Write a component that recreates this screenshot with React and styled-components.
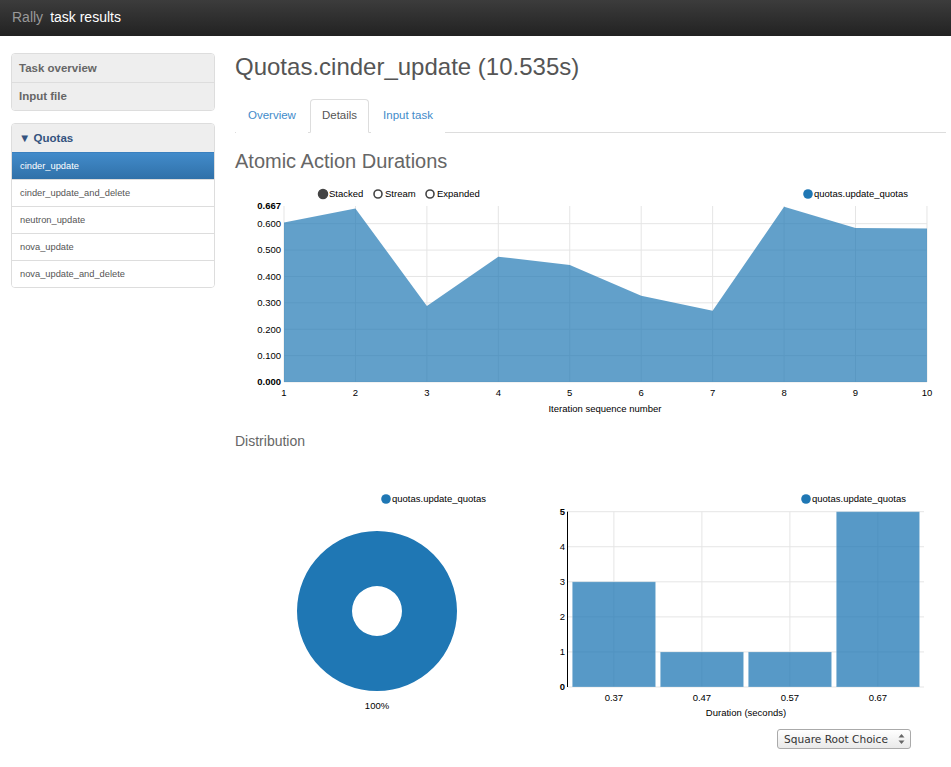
import React from "react";
import styled, { createGlobalStyle } from "styled-components";

const Global = createGlobalStyle`
  html, body { margin: 0; padding: 0; background: #fff; }
  body { font-family: "Liberation Sans", Arial, Helvetica, sans-serif; color: #333; }
  * { box-sizing: border-box; }
`;

const Header = styled.header`
  height: 36px;
  background: linear-gradient(#3c3c3c, #222);
  display: flex;
  align-items: center;
  padding: 0 0 2px 12px;
  gap: 7px;
  font-size: 14px;
`;
const Brand = styled.span`
  color: ${(p) => (p.$muted ? "#999" : "#fff")};
`;

const Layout = styled.div`
  display: flex;
  gap: 20px;
  padding: 17px 5px 0 11px;
  align-items: flex-start;
`;

const Sidebar = styled.nav`
  width: 204px;
  flex: none;
  display: flex;
  flex-direction: column;
  gap: 12px;
`;
const Panel = styled.div`
  border: 1px solid #ddd;
  border-radius: 4px;
  overflow: hidden;
  background: #fff;
`;
const NavHead = styled.div`
  background: #eee;
  line-height: 28px;
  padding: 0 7px;
  font-size: 11.5px;
  font-weight: bold;
  color: ${(p) => (p.$group ? "#34537e" : "#666")};
  & + & { border-top: 1px solid #ddd; line-height: 27px; }
`;
const NavItem = styled.div`
  line-height: 26px;
  padding: 0 8px;
  font-size: 9.3px;
  border-top: 1px solid ${(p) => (p.$active ? "#3a80bf" : "#ddd")};
  color: ${(p) => (p.$active ? "#fff" : "#555")};
  background: ${(p) => (p.$active ? "linear-gradient(#428bca, #3071a9)" : "#fff")};
  &:first-of-type { border-top-color: ${(p) => (p.$active ? "#428bca" : "#ddd")}; }
`;

const Main = styled.main`
  flex: 1;
  min-width: 0;
  display: flex;
  flex-direction: column;
`;
const Title = styled.h1`
  margin: 0;
  font-size: 24px;
  line-height: 28px;
  font-weight: normal;
  color: #555;
`;
const Tabs = styled.div`
  margin-top: 18px;
  padding-left: 1px;
  display: flex;
  border-bottom: 1px solid #ddd;
`;
const Tab = styled.div`
  margin: 0 2px -1px 0;
  padding: 7px 11px 8px;
  line-height: 17px;
  font-size: 11.5px;
  border: 1px solid ${(p) => (p.$active ? "#ddd" : "transparent")};
  border-bottom-color: ${(p) => (p.$active ? "#fff" : "transparent")};
  border-radius: 4px 4px 0 0;
  background: #fff;
  color: ${(p) => (p.$active ? "#555" : "#428bca")};
`;
const SectionTitle = styled.h2`
  margin: 16px 0 11px;
  font-size: 20px;
  line-height: 24px;
  font-weight: normal;
  color: #666;
`;
const SubTitle = styled.h3`
  margin: 7px 0 29px;
  font-size: 14px;
  line-height: 20px;
  font-weight: normal;
  color: #666;
`;
const Chart = styled.svg`
  display: block;
  flex: none;
  font-family: "Liberation Sans", Arial, sans-serif;
  font-size: 9.5px;
  text { fill: #000; }
`;
const DistRow = styled.div`
  display: flex;
`;
const SelectRow = styled.div`
  display: flex;
  justify-content: flex-end;
  padding: 4px 35px 0 0;
`;
const SelectWrap = styled.div`
  position: relative;
  width: 134px;
  height: 20px;
`;
const Select = styled.select`
  appearance: none;
  -webkit-appearance: none;
  width: 100%;
  height: 100%;
  margin: 0;
  padding: 0 0 0 6px;
  border: 1px solid #aaa;
  border-radius: 3px;
  background: linear-gradient(#fff, #e9e9e9);
  font-family: "DejaVu Sans", Verdana, sans-serif;
  font-size: 10.6px;
  color: #333;
  outline: none;
`;
const Arrows = styled.svg`
  position: absolute;
  right: 6px;
  top: 4px;
  pointer-events: none;
`;

const W = 711;
const lineVals = [0.604, 0.658, 0.288, 0.475, 0.443, 0.327, 0.27, 0.664, 0.584, 0.582];
const LX0 = 49;
const LSTEP = 71.44;
const LY0 = 198;
const LSCALE = 176 / 0.667;
const lx = (i) => LX0 + i * LSTEP;
const ly = (v) => LY0 - v * LSCALE;

function LineChart() {
  const pts = lineVals.map((v, i) => `${lx(i).toFixed(1)},${ly(v).toFixed(1)}`);
  const d = `M${lx(0)},${LY0} L${pts.join(" L")} L${lx(9)},${LY0} Z`;
  const yTicks = [0, 0.1, 0.2, 0.3, 0.4, 0.5, 0.6];
  return (
    <Chart width={W} height={240}>
      <g>
        <circle cx={88} cy={10} r={4.5} fill="#444" stroke="#444" strokeWidth={1.5} />
        <text x={94} y={13.3}>Stacked</text>
        <circle cx={143} cy={10} r={4} fill="#fff" stroke="#444" strokeWidth={1.6} />
        <text x={150} y={13.3}>Stream</text>
        <circle cx={195} cy={10} r={4} fill="#fff" stroke="#444" strokeWidth={1.6} />
        <text x={202} y={13.3}>Expanded</text>
        <circle cx={573} cy={10} r={4.8} fill="#1f77b4" />
        <text x={579} y={13.3}>quotas.update_quotas</text>
      </g>
      <g stroke="#e5e5e5" strokeWidth={1}>
        {yTicks.map((t) => (
          <line key={t} x1={LX0} x2={lx(9)} y1={ly(t)} y2={ly(t)} />
        ))}
        {lineVals.map((_, i) => (
          <line key={i} x1={lx(i)} x2={lx(i)} y1={22} y2={LY0} />
        ))}
      </g>
      <path d={d} fill="#1f77b4" fillOpacity={0.7} />
      <g textAnchor="end">
        {yTicks.slice(1).map((t) => (
          <text key={t} x={46} y={ly(t) + 3.3}>{t.toFixed(3)}</text>
        ))}
        <text x={46} y={LY0 + 3.3} fontWeight="bold">0.000</text>
        <text x={46} y={22 + 3.3} fontWeight="bold">0.667</text>
      </g>
      <g textAnchor="middle">
        {lineVals.map((_, i) => (
          <text key={i} x={lx(i)} y={211.5}>{i + 1}</text>
        ))}
        <text x={370} y={227.5}>Iteration sequence number</text>
      </g>
    </Chart>
  );
}

function PieChart() {
  const cx = 142, cy = 131, R = 80, r = 25;
  const d = `M${cx - R},${cy} A${R},${R} 0 1,1 ${cx + R},${cy} A${R},${R} 0 1,1 ${cx - R},${cy} Z M${cx - r},${cy} A${r},${r} 0 1,0 ${cx + r},${cy} A${r},${r} 0 1,0 ${cx - r},${cy} Z`;
  return (
    <Chart width={310} height={245}>
      <circle cx={151} cy={19} r={4.8} fill="#1f77b4" />
      <text x={157} y={22.3}>quotas.update_quotas</text>
      <path d={d} fill="#1f77b4" fillRule="evenodd" />
      <text x={cx} y={228.5} textAnchor="middle">100%</text>
    </Chart>
  );
}

const bars = [
  { label: "0.37", v: 3 },
  { label: "0.47", v: 1 },
  { label: "0.57", v: 1 },
  { label: "0.67", v: 5 },
];
function Histogram() {
  const ax = 22.5, y0 = 207, unit = 35.06, xEnd = 379;
  const hy = (v) => y0 - v * unit;
  return (
    <Chart width={401} height={245}>
      <circle cx={261} cy={19} r={4.8} fill="#1f77b4" />
      <text x={267} y={22.3}>quotas.update_quotas</text>
      <g stroke="#e5e5e5">
        {[0, 1, 2, 3, 4, 5].map((t) => (
          <line key={t} x1={ax} x2={xEnd} y1={hy(t)} y2={hy(t)} />
        ))}
        {bars.map((b, i) => (
          <line key={i} x1={27.3 + i * 88 + 41.6} x2={27.3 + i * 88 + 41.6} y1={hy(5)} y2={y0} />
        ))}
      </g>
      {bars.map((b, i) => (
        <rect
          key={i}
          x={27.3 + i * 88}
          y={hy(b.v)}
          width={83.3}
          height={b.v * unit}
          fill="#1f77b4"
          fillOpacity={0.75}
          stroke="#fff"
          strokeOpacity={0.25}
        />
      ))}
      <line x1={ax} x2={ax} y1={hy(5)} y2={y0} stroke="#000" />
      <g textAnchor="end">
        {[1, 2, 3, 4].map((t) => (
          <text key={t} x={20} y={hy(t) + 3.3}>{t}</text>
        ))}
        <text x={20} y={y0 + 3.3} fontWeight="bold">0</text>
        <text x={20} y={hy(5) + 3.3} fontWeight="bold">5</text>
      </g>
      <g textAnchor="middle">
        {bars.map((b, i) => (
          <text key={i} x={27.3 + i * 88 + 41.6} y={220.5}>{b.label}</text>
        ))}
        <text x={201} y={236}>Duration (seconds)</text>
      </g>
    </Chart>
  );
}

export default function App() {
  return (
    <>
      <Global />
      <Header>
        <Brand $muted>Rally</Brand>
        <Brand>task results</Brand>
      </Header>
      <Layout>
        <Sidebar>
          <Panel>
            <NavHead>Task overview</NavHead>
            <NavHead>Input file</NavHead>
          </Panel>
          <Panel>
            <NavHead $group>▼ Quotas</NavHead>
            <NavItem $active>cinder_update</NavItem>
            <NavItem>cinder_update_and_delete</NavItem>
            <NavItem>neutron_update</NavItem>
            <NavItem>nova_update</NavItem>
            <NavItem>nova_update_and_delete</NavItem>
          </Panel>
        </Sidebar>
        <Main>
          <Title>Quotas.cinder_update (10.535s)</Title>
          <Tabs>
            <Tab>Overview</Tab>
            <Tab $active>Details</Tab>
            <Tab>Input task</Tab>
          </Tabs>
          <SectionTitle>Atomic Action Durations</SectionTitle>
          <LineChart />
          <SubTitle>Distribution</SubTitle>
          <DistRow>
            <PieChart />
            <Histogram />
          </DistRow>
          <SelectRow>
            <SelectWrap>
              <Select defaultValue="sqrt">
                <option value="sqrt">Square Root Choice</option>
                <option value="sturges">Sturges Formula</option>
                <option value="rice">Rice Rule</option>
              </Select>
              <Arrows width={7} height={12} viewBox="0 0 7 12">
                <path d="M3.5 1 L6.5 4.5 L0.5 4.5 Z" fill="#666" />
                <path d="M3.5 11 L6.5 7.5 L0.5 7.5 Z" fill="#666" />
              </Arrows>
            </SelectWrap>
          </SelectRow>
        </Main>
      </Layout>
    </>
  );
}
